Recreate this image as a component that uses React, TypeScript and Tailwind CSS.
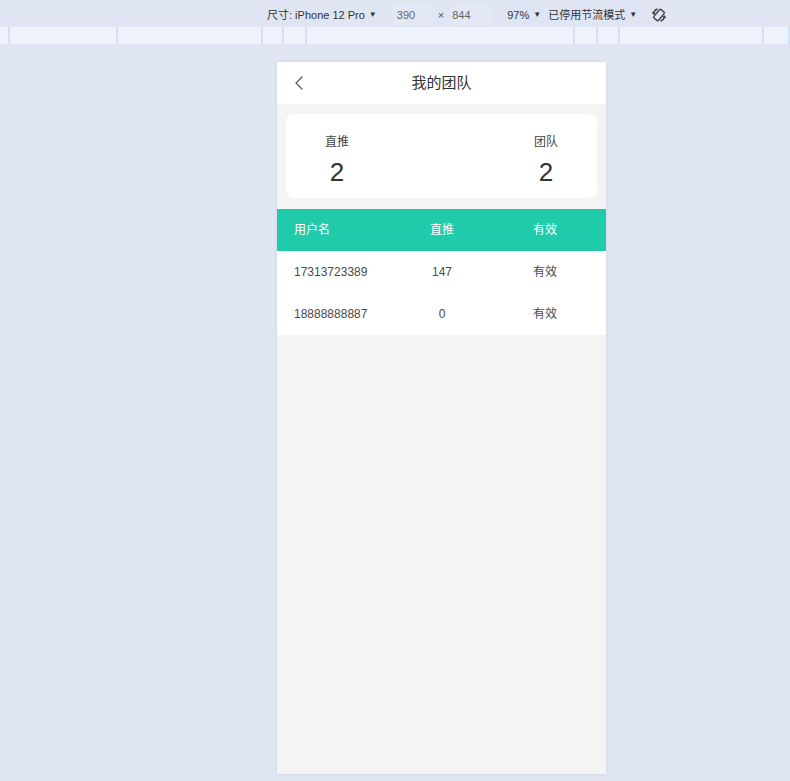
import { ChevronLeft } from "lucide-react";

const rows = [
  { user: "17313723389", direct: "147", status: "有效" },
  { user: "18888888887", direct: "0", status: "有效" },
];

const rulerStops = [10, 108, 145, 21, 23, 268, 23, 22, 144, 26];

function RotateIcon() {
  return (
    <svg width="16" height="16" viewBox="0 0 16 16" fill="none" stroke="#444" strokeWidth="1.4">
      <rect x="5" y="2.5" width="6" height="11" rx="1.2" transform="rotate(40 8 8)" />
      <path d="M2.5 6.5 A6 6 0 0 1 6.5 2" />
      <path d="M13.5 9.5 A6 6 0 0 1 9.5 14" />
      <path d="M1.5 5l1 1.8 1.8-1" />
      <path d="M14.5 11l-1-1.8-1.8 1" />
    </svg>
  );
}

export default function App() {
  return (
    <div
      className="w-[790px] h-[781px] bg-[#dfe5f3] overflow-hidden flex flex-col"
      style={{ fontFamily: '"Liberation Sans", "Noto Sans CJK SC", sans-serif' }}
    >
      {/* devtools toolbar */}
      <div className="h-[27px] pt-[3px] flex items-center text-[11px] text-[#333] shrink-0">
        <div className="ml-[267px] flex items-center gap-1">
          <span>尺寸: iPhone 12 Pro</span>
          <span className="text-[8px]">▼</span>
        </div>
        <div className="ml-[15px] w-[40px] h-[20px] bg-[#e3e8f5] flex items-center pl-[5px] text-[#666]">390</div>
        <span className="ml-[6px] text-[#555]">×</span>
        <div className="ml-[7px] w-[40px] h-[20px] bg-[#e3e8f5] flex items-center pl-[1px] text-[#666]">844</div>
        <div className="ml-[16px] flex items-center gap-1">
          <span>97%</span>
          <span className="text-[8px]">▼</span>
        </div>
        <div className="ml-[7px] flex items-center gap-1">
          <span>已停用节流模式</span>
          <span className="text-[8px]">▼</span>
        </div>
        <div className="ml-[14px] flex items-center">
          <RotateIcon />
        </div>
      </div>

      {/* ruler */}
      <div className="h-[17px] bg-[#eef2fa] flex shrink-0">
        {rulerStops.map((w, i) => (
          <div key={i} className="h-full border-r-2 border-[#d3e0f7]" style={{ width: w }} />
        ))}
      </div>

      {/* phone */}
      <div className="mt-[18px] ml-[277px] w-[329px] h-[712px] bg-[#f4f4f4] flex flex-col shadow-[0_0_3px_rgba(0,0,0,0.08)]">
        <div className="h-[42px] bg-white flex items-center relative shrink-0">
          <ChevronLeft className="absolute left-[10px] w-[24px] h-[24px] text-[#555]" strokeWidth={1.2} />
          <div className="w-full text-center text-[15px] text-[#333]">我的团队</div>
        </div>

        <div className="mx-[9px] mt-[10px] h-[84px] bg-white rounded-[8px] flex justify-between px-[39px] pt-[19px]">
          <div className="flex flex-col items-center">
            <span className="text-[12px] text-[#444]">直推</span>
            <span className="mt-[6px] text-[26px] leading-[30px] text-[#333]">2</span>
          </div>
          <div className="flex flex-col items-center">
            <span className="text-[12px] text-[#444]">团队</span>
            <span className="mt-[6px] text-[26px] leading-[30px] text-[#333]">2</span>
          </div>
        </div>

        <div className="mt-[11px] h-[42px] bg-[#20cbab] grid grid-cols-[110px_110px_96px] items-center text-[12px] text-white">
          <span className="pl-[17px]">用户名</span>
          <span className="text-center">直推</span>
          <span className="text-center">有效</span>
        </div>
        <div className="bg-white">
          {rows.map((r) => (
            <div key={r.user} className="h-[42px] grid grid-cols-[110px_110px_96px] items-center text-[12px] text-[#4a4a4a]">
              <span className="pl-[17px]">{r.user}</span>
              <span className="text-center">{r.direct}</span>
              <span className="text-center">{r.status}</span>
            </div>
          ))}
        </div>
      </div>
    </div>
  );
}
